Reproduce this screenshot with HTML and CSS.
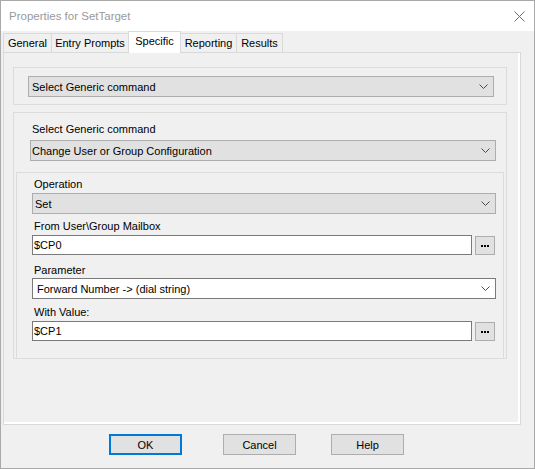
FILE: index.html
```html
<!DOCTYPE html>
<html>
<head>
<meta charset="utf-8">
<title>Properties for SetTarget</title>
<link rel="stylesheet" href="styles.css">
</head>
<body>
<div class="window">
  <div class="titlebar">
    <span class="title">Properties for SetTarget</span>
    <svg class="close" width="11" height="11" viewBox="0 0 11 11"><path d="M0.5 0.5 L10.5 10.5 M10.5 0.5 L0.5 10.5" stroke="#6f6f6f" stroke-width="1" fill="none"/></svg>
  </div>
  <div class="tabs">
    <div class="tab tab-general">General</div>
    <div class="tab tab-entry">Entry Prompts</div>
    <div class="tab tab-specific selected">Specific</div>
    <div class="tab tab-reporting">Reporting</div>
    <div class="tab tab-results">Results</div>
  </div>
  <div class="panel">
    <div class="page">
      <div class="group group-top">
        <div class="combo combo-first">
          <span class="combo-text">Select Generic command</span>
          <svg class="chev" width="9" height="5" viewBox="0 0 9 5"><path d="M0.5 0.5 L4.5 4.5 L8.5 0.5" stroke="#4a4a4a" stroke-width="1" fill="none"/></svg>
        </div>
      </div>
      <div class="group group-cmd">
        <div class="label label-cmd">Select Generic command</div>
        <div class="combo combo-cmd">
          <span class="combo-text">Change User or Group Configuration</span>
          <svg class="chev" width="9" height="5" viewBox="0 0 9 5"><path d="M0.5 0.5 L4.5 4.5 L8.5 0.5" stroke="#4a4a4a" stroke-width="1" fill="none"/></svg>
        </div>
        <div class="group group-inner">
          <div class="label label-op">Operation</div>
          <div class="combo field combo-op">
            <span class="combo-text">Set</span>
            <svg class="chev" width="9" height="5" viewBox="0 0 9 5"><path d="M0.5 0.5 L4.5 4.5 L8.5 0.5" stroke="#4a4a4a" stroke-width="1" fill="none"/></svg>
          </div>
          <div class="label label-from">From User\Group Mailbox</div>
          <div class="textrow">
            <div class="textbox">$CP0</div>
            <div class="ellipsis"><svg width="8" height="2" viewBox="0 0 8 2"><rect x="0" y="0" width="2" height="2" fill="#000"/><rect x="3" y="0" width="2" height="2" fill="#000"/><rect x="6" y="0" width="2" height="2" fill="#000"/></svg></div>
          </div>
          <div class="label label-param">Parameter</div>
          <div class="combo field combo-white">
            <span class="combo-text">Forward Number -&gt; (dial string)</span>
            <svg class="chev" width="9" height="5" viewBox="0 0 9 5"><path d="M0.5 0.5 L4.5 4.5 L8.5 0.5" stroke="#4a4a4a" stroke-width="1" fill="none"/></svg>
          </div>
          <div class="label label-value">With Value:</div>
          <div class="textrow">
            <div class="textbox">$CP1</div>
            <div class="ellipsis"><svg width="8" height="2" viewBox="0 0 8 2"><rect x="0" y="0" width="2" height="2" fill="#000"/><rect x="3" y="0" width="2" height="2" fill="#000"/><rect x="6" y="0" width="2" height="2" fill="#000"/></svg></div>
          </div>
        </div>
      </div>
    </div>
  </div>
  <div class="buttons">
    <div class="btn btn-ok">OK</div>
    <div class="btn btn-cancel">Cancel</div>
    <div class="btn btn-help">Help</div>
  </div>
</div>
</body>
</html>
```

FILE: styles.css
```css
* { box-sizing: border-box; }

html, body {
  margin: 0;
  padding: 0;
  background: #f0f0f0;
}

body {
  font-family: "Liberation Sans", Arial, sans-serif;
  font-size: 11px;
  color: #000;
}

.window {
  width: 535px;
  height: 469px;
  border: 1px solid #a9a9a9;
  background: #f0f0f0;
  display: flex;
  flex-direction: column;
}

.titlebar {
  height: 30px;
  background: #fff;
  display: flex;
  align-items: center;
  justify-content: space-between;
  padding-left: 8px;
  padding-right: 9px;
  flex: none;
}

.title {
  font-size: 11.5px;
  color: #9a9a9a;
}

.close { display: block; }

.tabs {
  display: flex;
  align-items: flex-end;
  height: 21px;
  margin-left: 2px;
  flex: none;
  position: relative;
  z-index: 1;
}

.tab {
  height: 19px;
  line-height: 18px;
  border: 1px solid #d9d9d9;
  border-bottom: none;
  background: #f0f0f0;
  text-align: center;
  white-space: nowrap;
  margin-left: -1px;
}

.tab-general { width: 49px; margin-left: 0; }
.tab-entry { width: 78px; }
.tab-specific { width: 53px; }
.tab-reporting { width: 57px; }
.tab-results { width: 47px; }

.tab.selected {
  height: 22px;
  margin-bottom: -1px;
  background: #fff;
  line-height: 18px;
  position: relative;
  z-index: 2;
}

.panel {
  margin-left: 2px;
  width: 518px;
  height: 373px;
  border: 1px solid #d9d9d9;
  background: #fff;
  padding: 0 2px 2px 0;
  flex: none;
}

.page {
  height: 100%;
  background: #f0f0f0;
  padding: 14px 11px 0 9px;
}

.group {
  border: 1px solid #dcdcdc;
}

.group-top {
  height: 38px;
  padding: 8px 12px 0 14px;
}

.group-cmd {
  margin-top: 7px;
  height: 247px;
  display: flex;
  flex-direction: column;
}

.group-inner {
  margin: 11px 2px 0 2px;
  border-bottom: none;
  flex: 1;
  padding-top: 4px;
  display: flex;
  flex-direction: column;
}

.label {
  height: 14px;
  line-height: 14px;
  white-space: nowrap;
}

.label-cmd { margin: 9px 0 0 18px; }

.group-inner .label { margin-left: 17px; }
.label-from { margin-top: 5px; }
.label-param { margin-top: 8px; }
.label-value { margin-top: 6px; }

.combo {
  height: 21px;
  border: 1px solid #adadad;
  background: #e1e1e1;
  display: flex;
  align-items: center;
  justify-content: space-between;
  padding-left: 2px;
  padding-right: 5px;
  white-space: nowrap;
}

.combo-first { padding-left: 3px; }

.combo-cmd {
  margin: 4px 10px 0 16px;
  padding-left: 1px;
}

.field { margin-left: 15px; margin-right: 7px; }

.combo-op { margin-top: 2px; padding-left: 2px; }

.combo-white {
  background: #fff;
  border-color: #7a7a7a;
  margin-top: 1px;
  padding-left: 4px;
}

.chev { display: block; flex: none; }

.textrow {
  display: flex;
  margin: 2px 7px 0 15px;
  height: 20px;
}

.textbox {
  flex: 1;
  height: 20px;
  border: 1px solid #7a7a7a;
  background: #fff;
  line-height: 18px;
  padding-left: 1px;
  white-space: nowrap;
}

.ellipsis {
  width: 20px;
  height: 19px;
  margin: 1px 1px 0 3px;
  border: 1px solid #adadad;
  background: #e1e1e1;
  display: flex;
  align-items: center;
  justify-content: center;
}

.ellipsis svg { display: block; margin-top: 1px; }

.buttons {
  display: flex;
  margin-top: 9px;
  padding-left: 108px;
  flex: none;
}

.btn {
  width: 73px;
  height: 21px;
  border: 1px solid #adadad;
  background: #e1e1e1;
  display: flex;
  align-items: center;
  justify-content: center;
}

.btn-ok { border: 2px solid #0078d7; }
.btn-cancel { margin-left: 41px; }
.btn-help { margin-left: 35px; }
```
